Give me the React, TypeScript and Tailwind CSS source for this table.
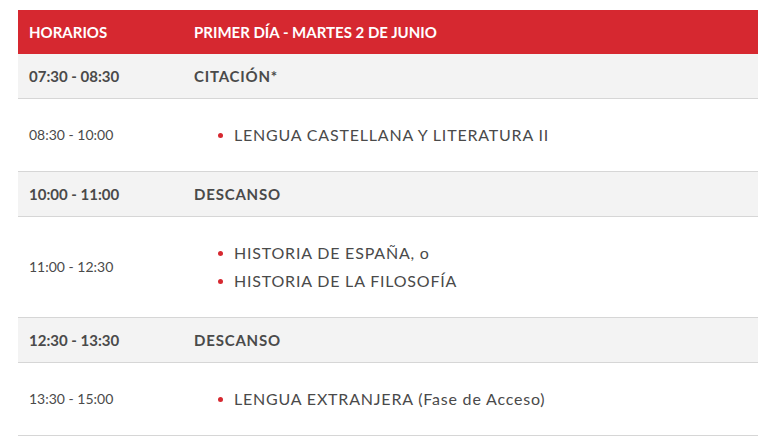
import React from "react";

type Row =
  | { kind: "gray"; time: string; label: string }
  | { kind: "list"; time: string; items: string[] };

const rows: Row[] = [
  { kind: "gray", time: "07:30 - 08:30", label: "CITACIÓN*" },
  { kind: "list", time: "08:30 - 10:00", items: ["LENGUA CASTELLANA Y LITERATURA II"] },
  { kind: "gray", time: "10:00 - 11:00", label: "DESCANSO" },
  { kind: "list", time: "11:00 - 12:30", items: ["HISTORIA DE ESPAÑA, o", "HISTORIA DE LA FILOSOFÍA"] },
  { kind: "gray", time: "12:30 - 13:30", label: "DESCANSO" },
  { kind: "list", time: "13:30 - 15:00", items: ["LENGUA EXTRANJERA (Fase de Acceso)"] },
];

export default function App() {
  return (
    <div className="w-[784px] h-[448px] bg-white pt-[10px] px-[18px] font-['Lato',sans-serif] text-[#4a4a4a]">
      <div className="w-[740px]">
        <div className="flex h-[44px] items-center bg-[#d62830] text-white font-bold text-[15px]">
          <div className="w-[165px] pl-[11px]">HORARIOS</div>
          <div className="flex-1 pl-[11px]">PRIMER DÍA - MARTES 2 DE JUNIO</div>
        </div>
        {rows.map((r, i) =>
          r.kind === "gray" ? (
            <div key={i} className="flex items-center h-[45px] bg-[#f3f3f3] border-b border-[#d6d6d6]">
              <div className="w-[165px] pl-[11px] font-bold text-[15px] leading-[16px]">{r.time}</div>
              <div className="flex-1 pl-[11px] font-bold text-[15px] leading-[16px] tracking-[0.8px]">{r.label}</div>
            </div>
          ) : (
            <div key={i} className="flex items-center bg-white border-b border-[#d6d6d6]">
              <div className="w-[165px] pl-[11px] text-[14px] leading-[16px]">{r.time}</div>
              <div className="flex-1 pl-[11px] py-[22px]">
                <ul className="pl-[24px]">
                  {r.items.map((it, j) => (
                    <li key={j} className="flex items-center gap-[11px] h-[28px] text-[16px] tracking-[0.8px]">
                      <span className="w-[5px] h-[5px] rounded-full bg-[#d62830] shrink-0" />
                      <span>{it}</span>
                    </li>
                  ))}
                </ul>
              </div>
            </div>
          )
        )}
      </div>
    </div>
  );
}
